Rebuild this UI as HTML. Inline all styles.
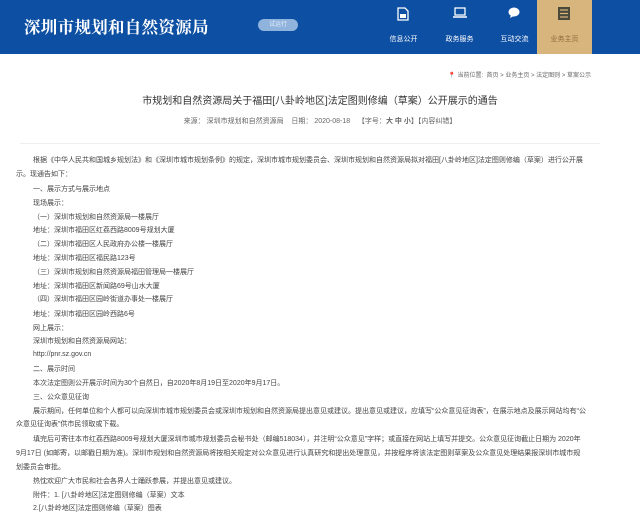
<!DOCTYPE html><html><head><meta charset="utf-8"><style>
body{margin:0;width:640px;height:513px;overflow:hidden;background:#fff;font-family:"Liberation Sans","Noto Sans CJK SC",sans-serif;}
.hd{position:absolute;left:0;top:0;width:640px;height:54px;background:#0d4fa3;}
.logo{position:absolute;left:24px;top:14px;color:#fff;font:bold 16.5px "Noto Serif CJK SC",serif;letter-spacing:0.3px}
.badge{position:absolute;left:258px;top:19px;width:40px;height:12px;border-radius:6px;background:#8fb3dc;color:#e8f0fa;font-size:6px;line-height:12px;text-align:center}
.nav{position:absolute;top:0;width:55px;height:54px;color:#fff;font-size:7px;text-align:center}
.nav .t{position:absolute;top:34px;width:100%}
.nav svg{position:absolute;left:21px;top:7px}
.bc{position:absolute;right:49px;top:70px;font-size:6px;color:#666}
.title{position:absolute;left:0;width:640px;top:92px;text-align:center;font-size:10px;color:#333}
.src{position:absolute;left:0;width:640px;top:116px;text-align:center;font-size:7px;color:#666}
.line{position:absolute;left:20px;top:143px;width:580px;height:1px;background:#eee}
.p{position:absolute;left:16px;font-size:7px;color:#444;white-space:nowrap}
</style></head><body>
<div class="hd">
<div class="logo">深圳市规划和自然资源局</div>
<div class="badge">试运行</div>
<div class="nav" style="left:376px"><svg width="12" height="14" viewBox="0 0 12 14"><path d="M1 1h7l3 3v9H1z" fill="none" stroke="#fff" stroke-width="1.3"/><rect x="3" y="7" width="6" height="4" fill="#fff"/></svg><div class="t">信息公开</div></div>
<div class="nav" style="left:432px"><svg width="14" height="12" viewBox="0 0 14 12"><rect x="2" y="1" width="10" height="7" fill="none" stroke="#fff" stroke-width="1.3"/><path d="M0 10h14" stroke="#fff" stroke-width="1.5"/></svg><div class="t">政务服务</div></div>
<div class="nav" style="left:487px"><svg width="14" height="12" viewBox="0 0 14 12"><ellipse cx="6" cy="5" rx="5.5" ry="4.5" fill="#fff"/><path d="M3 8l-1 3 4-2z" fill="#fff"/></svg><div class="t">互动交流</div></div>
<div class="nav" style="left:537px;background:#d8b57d"><svg width="12" height="13" viewBox="0 0 12 13"><rect x="0" y="0" width="12" height="13" fill="#4a4a3a"/><path d="M2 3h8M2 6.5h8M2 10h8" stroke="#d8b57d" stroke-width="1.2"/></svg><div class="t" style="color:#8a6a3a">业务主页</div></div>
</div>
<div class="bc">📍 当前位置:&nbsp; 首页 &gt; 业务主页 &gt; 法定图则 &gt; 草案公示</div>
<div class="title">市规划和自然资源局关于福田[八卦岭地区]法定图则修编（草案）公开展示的通告</div>
<div class="src">来源：&nbsp;深圳市规划和自然资源局&nbsp;&nbsp;&nbsp;&nbsp;日期：&nbsp;2020-08-18&nbsp;&nbsp;&nbsp;&nbsp;【字号：<b>大 中 小</b>】【内容纠错】</div>
<div class="line"></div>
<div class="p" style="top:155px;left:33px">根据《中华人民共和国城乡规划法》和《深圳市城市规划条例》的规定，深圳市城市规划委员会、深圳市规划和自然资源局拟对福田[八卦岭地区]法定图则修编（草案）进行公开展</div>
<div class="p" style="top:169px">示。现通告如下：</div>
<div class="p" style="top:184px;left:33px">一、展示方式与展示地点</div>
<div class="p" style="top:198px;left:33px">现场展示：</div>
<div class="p" style="top:212px;left:33px">（一）深圳市规划和自然资源局一楼展厅</div>
<div class="p" style="top:225px;left:33px">地址：深圳市福田区红荔西路8009号规划大厦</div>
<div class="p" style="top:239px;left:33px">（二）深圳市福田区人民政府办公楼一楼展厅</div>
<div class="p" style="top:253px;left:33px">地址：深圳市福田区福民路123号</div>
<div class="p" style="top:267px;left:33px">（三）深圳市规划和自然资源局福田管理局一楼展厅</div>
<div class="p" style="top:281px;left:33px">地址：深圳市福田区新闻路69号山水大厦</div>
<div class="p" style="top:294px;left:33px">（四）深圳市福田区园岭街道办事处一楼展厅</div>
<div class="p" style="top:309px;left:33px">地址：深圳市福田区园岭西路6号</div>
<div class="p" style="top:323px;left:33px">网上展示：</div>
<div class="p" style="top:336px;left:33px">深圳市规划和自然资源局网站：</div>
<div class="p" style="top:351px;left:33px">http://pnr.sz.gov.cn</div>
<div class="p" style="top:364px;left:33px">二、展示时间</div>
<div class="p" style="top:378px;left:33px">本次法定图则公开展示时间为30个自然日，自2020年8月19日至2020年9月17日。</div>
<div class="p" style="top:392px;left:33px">三、公众意见征询</div>
<div class="p" style="top:406px;left:33px">展示期间，任何单位和个人都可以向深圳市城市规划委员会或深圳市规划和自然资源局提出意见或建议。提出意见或建议，应填写“公众意见征询表”，在展示地点及展示网站均有“公</div>
<div class="p" style="top:419px">众意见征询表”供市民领取或下载。</div>
<div class="p" style="top:434px;left:33px">填完后可寄往本市红荔西路8009号规划大厦深圳市城市规划委员会秘书处（邮编518034），并注明“公众意见”字样；或直接在网站上填写并提交。公众意见征询截止日期为 2020年</div>
<div class="p" style="top:448px">9月17日 (如邮寄，以邮戳日期为准)。深圳市规划和自然资源局将按相关规定对公众意见进行认真研究和提出处理意见，并按程序将该法定图则草案及公众意见处理结果报深圳市城市规</div>
<div class="p" style="top:462px">划委员会审批。</div>
<div class="p" style="top:476px;left:33px">热忱欢迎广大市民和社会各界人士踊跃参展，并提出意见或建议。</div>
<div class="p" style="top:490px;left:33px">附件：1. [八卦岭地区]法定图则修编（草案）文本</div>
<div class="p" style="top:503px;left:33px">2.[八卦岭地区]法定图则修编（草案）图表</div>
</body></html>
